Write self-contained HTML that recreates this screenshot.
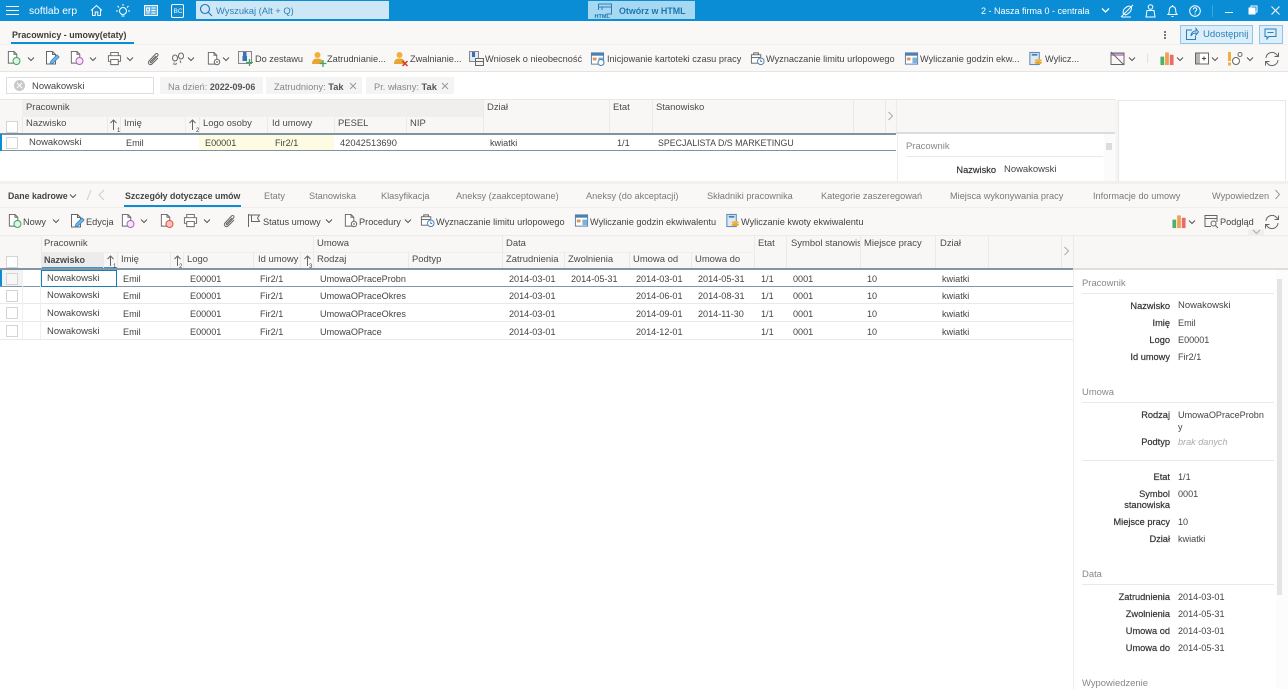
<!DOCTYPE html>
<html lang="pl"><head><meta charset="utf-8"><title>softlab erp</title>
<style>
html,body{margin:0;padding:0;width:1288px;height:699px;overflow:hidden;background:#fff}
#r{position:relative;width:1288px;height:699px;overflow:hidden;font-family:"Liberation Sans",sans-serif;font-size:9.1px;color:#444;filter:blur(.3px)}
#r div,#r span,#r svg{position:absolute}
#r span{white-space:nowrap;line-height:12px;transform:translateY(1px)}
#r span.n{font-size:9.450px}
#r span.tb{font-size:9.200px}
.b{font-weight:bold}
#r span.h{color:#4a4a4a;font-size:9.450px}
.w{color:#fff}
#r span.tab{color:#7a7a7a;font-size:9.200px}
#r span.l{text-align:right;width:100px;color:#333;-webkit-text-stroke:.2px #333;font-size:9.250px}
#r span.hd{color:#888;font-size:9.450px}
.ln{background:#e9e9e9;height:1px}
.cb{width:10px;height:10px;border:1px solid #d4d4d4;background:#fff}
svg.i{fill:none;stroke:#666;stroke-width:1}
svg.tw{fill:none;stroke:#fff;stroke-width:1}
.sp{width:1px;background:#eaeaea}
</style></head><body><div id="r">
<svg width="0" height="0" style="left:0;top:0"><defs>
<symbol id="doc" viewBox="0 0 16 16"><path d="M2.500 1.500h6l3 3v9.500h-9zM8.500 1.500v3h3" fill="#fff" stroke="#666"/></symbol>
<symbol id="chev" viewBox="0 0 8 8"><path d="M1 2.500l3 3 3-3" fill="none" stroke="#555" stroke-width="1"/></symbol>
<symbol id="print" viewBox="0 0 16 16"><path d="M4 5V1.500h8V5M4 11H1.500V5h13v6H12M4 9h8v5.500H4z" fill="#fff" stroke="#666"/></symbol>
<symbol id="clip" viewBox="0 0 16 16"><path d="M13 7l-6 6c-2 2-5-1-3-3l6.500-7c1.500-1.500 3.500.5 2 2L6.500 11.500c-.8.800-1.800-.2-1-1L11 5" fill="none" stroke="#666"/></symbol>
<symbol id="cal" viewBox="0 0 16 16"><rect x="1.500" y="2" width="13" height="12" fill="#fff" stroke="#4d7fb0"/><rect x="1.500" y="2" width="13" height="3" fill="#4d7fb0"/><rect x="3" y="7" width="4" height="3" fill="#e8924a"/><rect x="9" y="7" width="5" height="6" fill="#7fb0d8"/></symbol>
<symbol id="calc" viewBox="0 0 16 16"><rect x="2" y="1.500" width="10" height="13" fill="#dfeaf5" stroke="#4d7fb0"/><rect x="4" y="3" width="6" height="2" fill="#4d7fb0"/><ellipse cx="11" cy="10" rx="4" ry="1.500" fill="#f0b84a"/><ellipse cx="11" cy="12.500" rx="4" ry="1.500" fill="#e8a830"/></symbol>
<symbol id="brief" viewBox="0 0 16 16"><rect x="1.500" y="4" width="10" height="9" fill="#fff" stroke="#666"/><path d="M4 4V2h5v2" fill="none" stroke="#666"/><path d="M1.500 7h10" stroke="#666"/><circle cx="11.500" cy="11" r="3.500" fill="#fff" stroke="#4d7fb0"/><path d="M11.500 9v2.200h1.500" fill="none" stroke="#4d7fb0"/></symbol>
<symbol id="bars" viewBox="0 0 16 16"><rect x="1" y="6" width="4" height="9" fill="#4cb26a"/><rect x="6" y="1.500" width="4" height="13.500" fill="#f0a050"/><rect x="11" y="4" width="4" height="11" fill="#ec6a6a"/></symbol>
<symbol id="ref" viewBox="0 0 16 16"><path d="M2 7a6 6 0 0 1 10.500-3.500L14.500 5.500M14.500 1.500v4h-4M14 9a6 6 0 0 1-10.500 3.500L1.500 10.500M1.500 14.500v-4h4" fill="none" stroke="#666"/></symbol>
<symbol id="gear" viewBox="0 0 8 8"><circle cx="4" cy="4" r="2.700" fill="#fff" stroke="#666"/><circle cx="4" cy="4" r=".9" fill="#666"/></symbol>
<symbol id="person" viewBox="0 0 16 16"><circle cx="6.500" cy="4" r="3" fill="#f0b040"/><path d="M1 13c0-4 2-5.500 5.500-5.500S12 9 12 13z" fill="#e8a530"/></symbol>
</defs></svg>

<!-- top bar -->
<div style="left:0;top:0;width:1288px;height:21px;background:#0a8dd5"></div>
<div style="left:0;top:21px;width:1288px;height:50px;background:#f9f8f7"></div>
<svg class="tw" style="left:6px;top:5px" width="14" height="11"><path d="M0 1.500h13M0 5.500h13M0 9.500h13"/></svg>
<span class="w" style="left:29px;top:5px;font-size:10.300px">softlab erp</span>
<svg class="tw" style="left:90px;top:4px" width="13" height="13" viewBox="0 0 13 13"><path d="M1 6.500L6.500 1.500 12 6.500M2.500 5.500v6h2.700V8h2.600v3.500h2.700v-6"/></svg>
<svg class="tw" style="left:116px;top:4px" width="14" height="14" viewBox="0 0 14 14"><circle cx="7" cy="7" r="3.500"/><path d="M7 0v2M1.500 2l1.500 1.500M12.500 2L11 3.500M0 7h2M12 7h2M5.500 12h3"/></svg>
<svg class="tw" style="left:144px;top:5px" width="14" height="12" viewBox="0 0 14 12"><rect x=".5" y=".5" width="13" height="10" fill="#5bb4e4"/><path d="M7.500 3h4M7.500 5.500h4M7.500 8h4M2.500 3h3v3h-3zM2.500 8h3"/></svg>
<svg class="tw" style="left:171px;top:4px" width="13" height="14" viewBox="0 0 13 14"><rect x=".5" y=".5" width="12" height="13" rx="1.500"/></svg>
<span class="w" style="left:173.500px;top:5px;font-size:6.500px">BC</span>
<div style="left:196px;top:1px;width:193px;height:18px;background:#cde7f6"></div>
<svg style="left:199px;top:3px;fill:none;stroke:#1b78b6;stroke-width:1.100" width="14" height="14" viewBox="0 0 14 14"><circle cx="6" cy="6" r="4.500"/><path d="M9.500 9.500L13 13"/></svg>
<span style="left:216px;top:3.500px;color:#2a80b9;font-size:9.400px">Wyszukaj (Alt + Q)</span>
<div style="left:588px;top:1px;width:107px;height:18px;background:#a7d8f2"></div>
<svg style="left:594px;top:3px;fill:none;stroke:#2b7fb5" width="19" height="15" viewBox="0 0 19 15"><path d="M4.500 1h13v10h-5M4.500 1v6M4.500 4h13M8 4v3"/></svg>
<span class="b" style="left:594.500px;top:10px;color:#1e75ad;font-size:5.500px">HTML</span>
<span class="b" style="left:619px;top:3.500px;color:#1877b3;font-size:8.900px">Otwórz w HTML</span>
<span class="w" style="left:981px;top:3.500px;font-size:9px">2 - Nasza firma 0 - centrala</span>
<svg class="tw" style="left:1101px;top:6px;stroke-width:1.300" width="9" height="9"><path d="M1 2.500l3.500 3.500 3.500-3.500"/></svg>
<svg class="tw" style="left:1120px;top:4px" width="14" height="14" viewBox="0 0 14 14"><path d="M1 13L13 1M3.500 6c2-3 5-4.500 7-3.500s1 5-3 7.500l-2 1-2.500-2zM2 13h9"/></svg>
<svg class="tw" style="left:1145px;top:4px" width="11" height="14" viewBox="0 0 11 14"><circle cx="5.500" cy="3" r="2.300"/><path d="M1 13l1-6.500h7l1 6.500z"/></svg>
<svg class="tw" style="left:1167px;top:4px" width="11" height="14" viewBox="0 0 11 14"><path d="M1 10.500c1.200-1 1.300-2 1.300-4.500 0-2 1.400-3.500 3.200-3.500S8.700 4 8.700 6c0 2.500.1 3.500 1.300 4.500zM4.500 12.500h2M5.500 1v1.500"/></svg>
<svg class="tw" style="left:1189px;top:5px" width="12" height="12" viewBox="0 0 12 12"><circle cx="6" cy="6" r="5.300"/><path d="M4.300 4.500c0-2.300 3.500-2.300 3.500 0 0 1.300-1.800 1.300-1.800 3M6 8.500v1"/></svg>
<div style="left:1212px;top:5px;width:1px;height:12px;background:#3ba6e0"></div>
<svg class="tw" style="left:1225px;top:5px" width="9" height="10"><path d="M0 7.500h8"/></svg>
<svg class="tw" style="left:1248px;top:5px" width="10" height="10" viewBox="0 0 10 10"><rect x="1" y="3" width="6" height="6" fill="#fff"/><path d="M3 3V1h6v6H7"/></svg>
<svg class="tw" style="left:1271px;top:6px" width="9" height="9"><path d="M.5.500l8 8M8.500.500l-8 8"/></svg>

<!-- tab row -->
<span class="b" style="left:12px;top:27.500px;color:#3c3c3c;font-size:8.900px">Pracownicy - umowy(etaty)</span>
<div style="left:11px;top:42px;width:123px;height:2px;background:#0a8dd5"></div>
<div style="left:0;top:44px;width:1288px;height:1px;background:#f2f1f0"></div>
<div style="left:1164px;top:31px;width:2px;height:2px;background:#777;box-shadow:0 3px 0 #777,0 6px 0 #777"></div>
<div style="left:1180px;top:25px;width:71px;height:17px;background:#dceefa;border:1px solid #8fc6e8"></div>
<svg style="left:1185px;top:27px;fill:none;stroke:#2a80b9" width="14" height="14" viewBox="0 0 14 14"><path d="M7 3H1.500v9.500h9V9M6 9c0-3 2-5 5-5V1.500L13.500 5 11 8V6C8.500 6 7 7 6 9z"/></svg>
<span style="left:1203px;top:27.500px;color:#2a80b9;font-size:9.600px">Udostępnij</span>
<div style="left:1259px;top:25px;width:22px;height:17px;background:#dceefa;border:1px solid #8fc6e8"></div>
<svg style="left:1264px;top:28px;fill:none;stroke:#2a80b9" width="13" height="12" viewBox="0 0 13 12"><path d="M1 1h11v7.500H5l-2 2.500V8.500H1zM3.500 4.500h6"/></svg>

<!-- toolbar 1 -->
<svg style="left:6px;top:50px" width="15" height="15"><use href="#doc"/><circle cx="10.500" cy="11" r="3.500" fill="#dff3e5" stroke="#38a860"/></svg>
<svg style="left:27px;top:55px" width="8" height="8"><use href="#chev"/></svg>
<svg style="left:44px;top:50px" width="16" height="16"><use href="#doc"/><path d="M6 14l1-3 6-6 2 2-6 6z" fill="#7ab8e6" stroke="#3d8cc8"/></svg>
<svg style="left:69px;top:50px" width="15" height="15"><use href="#doc"/><circle cx="10.500" cy="11" r="3.500" fill="#f5e6f5" stroke="#b060c0"/></svg>
<svg style="left:89px;top:55px" width="8" height="8"><use href="#chev"/></svg>
<svg style="left:107px;top:51px" width="15" height="15"><use href="#print"/></svg>
<svg style="left:126px;top:55px" width="8" height="8"><use href="#chev"/></svg>
<svg style="left:145px;top:51px" width="16" height="16"><use href="#clip"/></svg>
<svg style="left:171px;top:51px;fill:none;stroke:#666" width="14" height="15" viewBox="0 0 14 15"><ellipse cx="4" cy="7" rx="2.500" ry="3"/><ellipse cx="10" cy="5" rx="2.500" ry="3"/><path d="M3 11.500v2.500M5.500 12l-1 2M9 9.500l1 2.500"/></svg>
<svg style="left:187px;top:55px" width="8" height="8"><use href="#chev"/></svg>
<svg style="left:206px;top:51px" width="15" height="15"><use href="#doc"/><use href="#gear" x="7" y="7" width="8" height="8"/></svg>
<svg style="left:222px;top:55px" width="8" height="8"><use href="#chev"/></svg>
<svg style="left:238px;top:51px" width="15" height="15" viewBox="0 0 15 15"><rect x=".5" y=".5" width="13" height="12" fill="#eef3f8" stroke="#888"/><rect x="5" y="1" width="3.500" height="4" fill="#3d6fb0"/><rect x="4.500" y="5" width="4.500" height="5" fill="#3d6fb0"/><path d="M11.500 8v7M8 11.500h7" stroke="#38a860" stroke-width="1.300"/></svg>
<span class="tb" style="left:255px;top:52px">Do zestawu</span>
<svg style="left:311px;top:51px" width="16" height="16"><use href="#person"/><path d="M12 9v7M8.500 12.500h7" stroke="#38a860" stroke-width="1.300"/></svg>
<span class="tb" style="left:327px;top:52px">Zatrudnianie...</span>
<svg style="left:393px;top:51px" width="16" height="16"><use href="#person"/><path d="M9.500 10l5 5M14.500 10l-5 5" stroke="#d43a2a" stroke-width="1.500"/></svg>
<span class="tb" style="left:410px;top:52px">Zwalnianie...</span>
<svg style="left:469px;top:51px" width="15" height="15" viewBox="0 0 15 15"><rect x=".5" y=".5" width="9" height="10" fill="#dfeaf5" stroke="#888"/><rect x="3" y="1" width="3" height="5" fill="#3d6fb0"/><rect x="6.500" y="7.500" width="8" height="7" fill="#f5f5f5" stroke="#666"/><path d="M6.500 10.500h8" stroke="#666"/></svg>
<span class="tb" style="left:485px;top:52px">Wniosek o nieobecność</span>
<svg style="left:590px;top:51px" width="15" height="15"><use href="#cal"/><circle cx="11" cy="11.500" r="3" fill="#fff" stroke="#4d7fb0"/></svg>
<span class="tb" style="left:607px;top:52px">Inicjowanie kartoteki czasu pracy</span>
<svg style="left:750px;top:51px" width="15" height="15"><use href="#brief"/></svg>
<span class="tb" style="left:766px;top:52px">Wyznaczanie limitu urlopowego</span>
<svg style="left:904px;top:51px" width="15" height="15"><use href="#cal"/></svg>
<span class="tb" style="left:920px;top:52px">Wyliczanie godzin ekw...</span>
<svg style="left:1028px;top:51px" width="15" height="15"><use href="#calc"/></svg>
<span class="tb" style="left:1045px;top:52px">Wylicz...</span>
<svg style="left:1110px;top:51px;fill:none" width="15" height="15" viewBox="0 0 15 15"><rect x="1" y="2" width="13" height="3" fill="#c79bd1"/><rect x="1" y="2" width="13" height="11.500" stroke="#666"/><path d="M1 1l13 13" stroke="#666"/></svg>
<svg style="left:1128px;top:55px" width="8" height="8"><use href="#chev"/></svg>
<div style="left:1147px;top:54px;width:1px;height:9px;background:#e0e0e0"></div>
<svg style="left:1159px;top:51px" width="16" height="15"><use href="#bars"/></svg>
<svg style="left:1176px;top:55px" width="8" height="8"><use href="#chev"/></svg>
<svg style="left:1195px;top:52px" width="15" height="14" viewBox="0 0 15 14"><rect x=".5" y="1" width="13" height="11" fill="#fff" stroke="#666"/><rect x="1" y="1.500" width="4" height="10" fill="#b5b5b5"/><path d="M7 6.500h4M9 4.500v4" stroke="#444"/></svg>
<svg style="left:1211px;top:55px" width="8" height="8"><use href="#chev"/></svg>
<svg style="left:1227px;top:51px" width="16" height="16" viewBox="0 0 16 16"><rect x="1" y="1" width="3" height="9" fill="#f0b040"/><rect x="1" y="11.500" width="3" height="3" fill="#f0b040"/><circle cx="9" cy="10" r="3.500" fill="#fff" stroke="#666"/><circle cx="13" cy="3.500" r="2" fill="#fff" stroke="#666"/></svg>
<svg style="left:1246px;top:55px" width="8" height="8"><use href="#chev"/></svg>
<svg style="left:1264px;top:51px" width="16" height="16"><use href="#ref"/></svg>
<div style="left:0;top:71px;width:1288px;height:1px;background:#e4e4e4"></div>

<!-- filter row -->
<div style="left:6px;top:77px;width:146px;height:15px;border:1px solid #dedede;background:#fff"></div>
<div style="left:14px;top:80px;width:11px;height:11px;border-radius:6px;background:#c9c9c9"></div>
<svg style="left:16px;top:82px;stroke:#fff" width="7" height="7"><path d="M1 1l5 5M6 1l-5 5"/></svg>
<span class="n" style="left:32px;top:79.500px">Nowakowski</span>
<div style="left:160px;top:77px;width:103px;height:17px;background:#f4f4f4"></div>
<span style="left:168px;top:79.500px;color:#888;font-size:9.300px">Na dzień: <b style="color:#555;font-weight:bold;font-size:8.900px">2022-09-06</b></span>
<div style="left:266px;top:77px;width:96px;height:17px;background:#f4f4f4"></div>
<span style="left:274px;top:79.500px;color:#888;font-size:9.300px">Zatrudniony: <b style="color:#555">Tak</b></span>
<svg style="left:349px;top:82px;stroke:#999" width="8" height="8"><path d="M1 1l6 6M7 1L1 7"/></svg>
<div style="left:366px;top:77px;width:88px;height:17px;background:#f4f4f4"></div>
<span style="left:374px;top:79.500px;color:#888;font-size:9.300px">Pr. własny: <b style="color:#555">Tak</b></span>
<svg style="left:441px;top:82px;stroke:#999" width="8" height="8"><path d="M1 1l6 6M7 1L1 7"/></svg>

<!-- upper grid -->
<div style="left:0;top:99px;width:1115px;height:34px;background:#f8f7f6;border-top:1px solid #e6e6e6"></div>
<div style="left:22px;top:100px;width:461px;height:17px;background:#f0efee"></div>
<div style="left:896px;top:100px;width:1px;height:33px;background:#ececec"></div>
<div style="left:0;top:133px;width:896px;height:2px;background:#7f93a3"></div>
<div style="left:896px;top:132px;width:219px;height:2px;background:#dcdcdc"></div>
<div style="left:0;top:150px;width:896px;height:1px;background:#7f93a3"></div>
<div style="left:0;top:134px;width:2px;height:17px;background:#0a8dd5"></div>
<span class="h" style="left:26px;top:101px">Pracownik</span>
<span class="h" style="left:487px;top:101px">Dział</span>
<span class="h" style="left:613px;top:101px">Etat</span>
<span class="h" style="left:656px;top:101px">Stanowisko</span>
<span class="h" style="left:26px;top:117px">Nazwisko</span>
<span class="h" style="left:124px;top:117px">Imię</span>
<span class="h" style="left:203px;top:117px">Logo osoby</span>
<span class="h" style="left:272px;top:117px">Id umowy</span>
<span class="h" style="left:338px;top:117px">PESEL</span>
<span class="h" style="left:410px;top:117px">NIP</span>
<svg style="left:109px;top:119px;fill:none;stroke:#666" width="9" height="11"><path d="M4.500 11V1M1.500 4l3-3 3 3"/></svg><span style="left:117px;top:124px;font-size:6px">1</span>
<svg style="left:188px;top:119px;fill:none;stroke:#666" width="9" height="11"><path d="M4.500 11V1M1.500 4l3-3 3 3"/></svg><span style="left:196px;top:124px;font-size:6px">2</span>
<div class="sp" style="left:22px;top:117px;height:16px"></div><div class="sp" style="left:107px;top:117px;height:16px"></div><div class="sp" style="left:120px;top:117px;height:16px"></div><div class="sp" style="left:185px;top:117px;height:16px"></div><div class="sp" style="left:199px;top:117px;height:16px"></div><div class="sp" style="left:267px;top:117px;height:16px"></div><div class="sp" style="left:334px;top:117px;height:16px"></div><div class="sp" style="left:406px;top:117px;height:16px"></div><div class="sp" style="left:483px;top:100px;height:33px"></div><div class="sp" style="left:609px;top:100px;height:33px"></div><div class="sp" style="left:652px;top:100px;height:33px"></div><div class="sp" style="left:853px;top:100px;height:33px"></div><div class="sp" style="left:885px;top:100px;height:33px"></div>
<div class="cb" style="left:6px;top:121px"></div>
<svg style="left:887px;top:111px;fill:none;stroke:#aaa" width="7" height="10"><path d="M1.500 1l4 4-4 4"/></svg>
<div class="cb" style="left:6px;top:137px"></div>
<div style="left:199px;top:135px;width:135px;height:15px;background:#fdfce2"></div>
<span class="n" style="left:29px;top:136px">Nowakowski</span>
<span style="left:126px;top:136px">Emil</span>
<span style="left:205px;top:136px">E00001</span>
<span style="left:275px;top:136px">Fir2/1</span>
<span style="left:340px;top:136px;font-size:9.300px">42042513690</span>
<span style="left:490px;top:136px">kwiatki</span>
<span style="left:617px;top:136px">1/1</span>
<span style="left:658px;top:136px;font-size:8.800px">SPECJALISTA D/S MARKETINGU</span>

<!-- upper details -->
<div style="left:897px;top:134px;width:1px;height:47px;background:#ececec"></div>
<span class="hd" style="left:906px;top:140px">Pracownik</span>
<div class="ln" style="left:906px;top:156px;width:197px"></div>
<span class="l" style="left:896px;top:163px">Nazwisko</span>
<span class="n" style="left:1004px;top:163px">Nowakowski</span>
<div style="left:1104px;top:134px;width:10px;height:47px;background:#fbfbfb"></div>
<div style="left:1106px;top:143px;width:6px;height:7px;background:#dcdcdc"></div>
<div style="left:1115px;top:100px;width:3px;height:81px;background:#f5f5f5"></div>
<div style="left:1118px;top:100px;width:166px;height:81px;border:1px solid #e8e8e8;background:#fff"></div>
<div style="left:0;top:181px;width:1288px;height:3px;background:#f1f0ef"></div>

<!-- tabs lower -->
<div style="left:0;top:184px;width:1288px;height:52px;background:#f9f8f7"></div>
<div style="left:0;top:207px;width:1288px;height:1px;background:#efeeed"></div>
<span class="b" style="left:8px;top:188.500px;font-size:8.800px">Dane kadrowe</span>
<svg style="left:69px;top:192px" width="8" height="8"><use href="#chev"/></svg>
<svg style="left:85px;top:189px;fill:none;stroke:#ccc" width="20" height="12"><path d="M6 1L2 11M19 1l-5 5 5 5"/></svg>
<span class="b" style="left:125px;top:188.500px;font-size:8.800px">Szczegóły dotyczące umów</span>
<div style="left:124px;top:205px;width:117px;height:2px;background:#0a8dd5"></div>
<span class="tab" style="left:264px;top:188.500px">Etaty</span>
<span class="tab" style="left:309px;top:188.500px">Stanowiska</span>
<span class="tab" style="left:381px;top:188.500px">Klasyfikacja</span>
<span class="tab" style="left:456px;top:188.500px">Aneksy (zaakceptowane)</span>
<span class="tab" style="left:586px;top:188.500px">Aneksy (do akceptacji)</span>
<span class="tab" style="left:707px;top:188.500px">Składniki pracownika</span>
<span class="tab" style="left:821px;top:188.500px">Kategorie zaszeregowań</span>
<span class="tab" style="left:950px;top:188.500px">Miejsca wykonywania pracy</span>
<span class="tab" style="left:1093px;top:188.500px">Informacje do umowy</span>
<span class="tab" style="left:1212px;top:188.500px">Wypowiedzen</span>
<svg style="left:1274px;top:189px;fill:none;stroke:#999" width="7" height="11"><path d="M1.500 1l4 4.500-4 4.500"/></svg>

<!-- toolbar 2 -->
<svg style="left:7px;top:213px" width="15" height="15"><use href="#doc"/><circle cx="10.500" cy="11" r="3.500" fill="#dff3e5" stroke="#38a860"/></svg>
<span class="tb" style="left:23px;top:214.500px">Nowy</span>
<svg style="left:52px;top:217px" width="8" height="8"><use href="#chev"/></svg>
<svg style="left:69px;top:213px" width="16" height="16"><use href="#doc"/><path d="M6 14l1-3 6-6 2 2-6 6z" fill="#7ab8e6" stroke="#3d8cc8"/></svg>
<span class="tb" style="left:86px;top:214.500px">Edycja</span>
<svg style="left:120px;top:213px" width="15" height="15"><use href="#doc"/><circle cx="10.500" cy="11" r="3.500" fill="#f5e6f5" stroke="#b060c0"/></svg>
<svg style="left:140px;top:217px" width="8" height="8"><use href="#chev"/></svg>
<svg style="left:159px;top:213px" width="15" height="15"><use href="#doc"/><circle cx="10.500" cy="11" r="3.500" fill="#f9c5bd" stroke="#e0503c"/></svg>
<svg style="left:183px;top:213px" width="15" height="15"><use href="#print"/></svg>
<svg style="left:203px;top:217px" width="8" height="8"><use href="#chev"/></svg>
<svg style="left:221px;top:213px" width="16" height="16"><use href="#clip"/></svg>
<svg style="left:247px;top:213px;fill:none;stroke:#666" width="14" height="15" viewBox="0 0 14 15"><path d="M1.500 14V1M1.500 2h11l-2 3 2 3.500h-8V2"/></svg>
<span class="tb" style="left:263px;top:214.500px">Status umowy</span>
<svg style="left:325px;top:217px" width="8" height="8"><use href="#chev"/></svg>
<svg style="left:343px;top:213px" width="15" height="15"><use href="#doc"/><use href="#gear" x="7" y="7" width="8" height="8"/></svg>
<span class="tb" style="left:359px;top:214.500px">Procedury</span>
<svg style="left:404px;top:217px" width="8" height="8"><use href="#chev"/></svg>
<svg style="left:420px;top:213px" width="15" height="15"><use href="#brief"/></svg>
<span class="tb" style="left:436px;top:214.500px">Wyznaczanie limitu urlopowego</span>
<svg style="left:574px;top:213px" width="15" height="15"><use href="#cal"/></svg>
<span class="tb" style="left:590px;top:214.500px">Wyliczanie godzin ekwiwalentu</span>
<svg style="left:725px;top:213px" width="15" height="15"><use href="#calc"/></svg>
<span class="tb" style="left:741px;top:214.500px">Wyliczanie kwoty ekwiwalentu</span>
<svg style="left:1171px;top:214px" width="16" height="15"><use href="#bars"/></svg>
<svg style="left:1188px;top:218px" width="8" height="8"><use href="#chev"/></svg>
<svg style="left:1204px;top:214px;fill:none;stroke:#666" width="15" height="15" viewBox="0 0 15 15"><path d="M7 12.500H1V1.500h12V8M1 4.500h12"/><circle cx="9.500" cy="9.500" r="2.500"/><path d="M11.500 11.500l2.500 2.500"/></svg>
<span class="tb" style="left:1220px;top:214.500px">Podgląd</span>
<svg style="left:1264px;top:214px" width="16" height="16"><use href="#ref"/></svg>
<div style="left:1248px;top:229px;width:16px;height:6px;background:#f0efee"></div>
<svg style="left:1252px;top:229px;fill:none;stroke:#aaa" width="9" height="6"><path d="M1 1l3.500 3.500L8 1"/></svg>
<div style="left:0;top:235px;width:1288px;height:1px;background:#ececec"></div>

<!-- lower grid header -->
<div style="left:0;top:236px;width:1288px;height:32px;background:#f8f7f6"></div>
<div style="left:41px;top:252px;width:712px;height:1px;background:#efefef"></div>
<div style="left:41px;top:252px;width:62px;height:15px;background:#ececec"></div>
<div style="left:41px;top:267px;width:76px;height:1px;background:#3b96d0"></div>
<div style="left:0;top:268px;width:1073px;height:2px;background:#8496a5"></div>
<div style="left:1073px;top:268px;width:215px;height:2px;background:#dedede"></div>
<span class="h" style="left:44px;top:237px">Pracownik</span>
<span class="h" style="left:317px;top:237px">Umowa</span>
<span class="h" style="left:506px;top:237px">Data</span>
<span class="h" style="left:758px;top:237px">Etat</span>
<span class="h" style="left:791px;top:237px;width:69px;overflow:hidden">Symbol stanowis</span>
<span class="h" style="left:864px;top:237px">Miejsce pracy</span>
<span class="h" style="left:940px;top:237px">Dział</span>
<span class="b h" style="left:44px;top:253px;font-size:9px">Nazwisko</span>
<span class="h" style="left:121px;top:253px">Imię</span>
<span class="h" style="left:187px;top:253px">Logo</span>
<span class="h" style="left:258px;top:253px">Id umowy</span>
<span class="h" style="left:317px;top:253px">Rodzaj</span>
<span class="h" style="left:412px;top:253px">Podtyp</span>
<span class="h" style="left:506px;top:253px">Zatrudnienia</span>
<span class="h" style="left:568px;top:253px">Zwolnienia</span>
<span class="h" style="left:633px;top:253px">Umowa od</span>
<span class="h" style="left:695px;top:253px">Umowa do</span>
<svg style="left:106px;top:255px;fill:none;stroke:#666" width="9" height="11"><path d="M4.500 11V1M1.500 4l3-3 3 3"/></svg><span style="left:113px;top:260px;font-size:6px">1</span>
<svg style="left:173px;top:255px;fill:none;stroke:#666" width="9" height="11"><path d="M4.500 11V1M1.500 4l3-3 3 3"/></svg><span style="left:179px;top:260px;font-size:6px">2</span>
<svg style="left:303px;top:255px;fill:none;stroke:#666" width="9" height="11"><path d="M4.500 11V1M1.500 4l3-3 3 3"/></svg><span style="left:309px;top:260px;font-size:6px">3</span>
<div class="sp" style="left:41px;top:236px;height:32px"></div><div class="sp" style="left:103px;top:252px;height:16px"></div><div class="sp" style="left:117px;top:252px;height:16px"></div><div class="sp" style="left:170px;top:252px;height:16px"></div><div class="sp" style="left:183px;top:252px;height:16px"></div><div class="sp" style="left:253px;top:252px;height:16px"></div><div class="sp" style="left:300px;top:252px;height:16px"></div><div class="sp" style="left:313px;top:236px;height:32px"></div><div class="sp" style="left:408px;top:252px;height:16px"></div><div class="sp" style="left:502px;top:236px;height:32px"></div><div class="sp" style="left:564px;top:252px;height:16px"></div><div class="sp" style="left:629px;top:252px;height:16px"></div><div class="sp" style="left:691px;top:252px;height:16px"></div><div class="sp" style="left:754px;top:236px;height:32px"></div><div class="sp" style="left:786px;top:236px;height:32px"></div><div class="sp" style="left:860px;top:236px;height:32px"></div><div class="sp" style="left:935px;top:236px;height:32px"></div><div class="sp" style="left:988px;top:236px;height:32px"></div><div class="sp" style="left:1061px;top:236px;height:32px"></div><div class="sp" style="left:1073px;top:236px;height:32px"></div>
<div class="cb" style="left:6px;top:256px"></div>
<svg style="left:1063px;top:246px;fill:none;stroke:#aaa" width="7" height="10"><path d="M1.500 1l4 4-4 4"/></svg>

<!-- lower rows -->
<div style="left:0;top:270px;width:22px;height:16px;background:#f3f3f3"></div>
<div style="left:0;top:270px;width:2px;height:16px;background:#0a8dd5"></div>
<div style="left:0;top:286px;width:1073px;height:1px;background:#8496a5"></div>
<div class="ln" style="left:0;top:303px;width:1073px"></div>
<div class="ln" style="left:0;top:321px;width:1073px"></div>
<div class="ln" style="left:0;top:339px;width:1073px"></div>
<div style="left:22px;top:270px;width:1px;height:69px;background:#efefef"></div>
<div style="left:40px;top:270px;width:1px;height:69px;background:#efefef"></div>
<div style="left:41px;top:270px;width:74px;height:15px;border:1px solid #1a7fb8"></div>
<div class="cb" style="left:6px;top:273px;background:#f7f7f7"></div>
<div class="cb" style="left:6px;top:290px"></div>
<div class="cb" style="left:6px;top:307px"></div>
<div class="cb" style="left:6px;top:325px"></div>

<span class="n" style="left:47px;top:272px">Nowakowski</span><span style="left:123px;top:272px">Emil</span><span style="left:190px;top:272px">E00001</span><span style="left:260px;top:272px">Fir2/1</span><span style="left:320px;top:272px">UmowaOPraceProbn</span><span style="left:509px;top:272px">2014-03-01</span><span style="left:571px;top:272px">2014-05-31</span><span style="left:636px;top:272px">2014-03-01</span><span style="left:698px;top:272px">2014-05-31</span><span style="left:761px;top:272px">1/1</span><span style="left:793px;top:272px">0001</span><span style="left:867px;top:272px">10</span><span style="left:942px;top:272px">kwiatki</span>

<span class="n" style="left:47px;top:289px">Nowakowski</span><span style="left:123px;top:289px">Emil</span><span style="left:190px;top:289px">E00001</span><span style="left:260px;top:289px">Fir2/1</span><span style="left:320px;top:289px">UmowaOPraceOkres</span><span style="left:509px;top:289px">2014-03-01</span><span style="left:636px;top:289px">2014-06-01</span><span style="left:698px;top:289px">2014-08-31</span><span style="left:761px;top:289px">1/1</span><span style="left:793px;top:289px">0001</span><span style="left:867px;top:289px">10</span><span style="left:942px;top:289px">kwiatki</span>

<span class="n" style="left:47px;top:306.500px">Nowakowski</span><span style="left:123px;top:306.500px">Emil</span><span style="left:190px;top:306.500px">E00001</span><span style="left:260px;top:306.500px">Fir2/1</span><span style="left:320px;top:306.500px">UmowaOPraceOkres</span><span style="left:509px;top:306.500px">2014-03-01</span><span style="left:636px;top:306.500px">2014-09-01</span><span style="left:698px;top:306.500px">2014-11-30</span><span style="left:761px;top:306.500px">1/1</span><span style="left:793px;top:306.500px">0001</span><span style="left:867px;top:306.500px">10</span><span style="left:942px;top:306.500px">kwiatki</span>

<span class="n" style="left:47px;top:325px">Nowakowski</span><span style="left:123px;top:325px">Emil</span><span style="left:190px;top:325px">E00001</span><span style="left:260px;top:325px">Fir2/1</span><span style="left:320px;top:325px">UmowaOPrace</span><span style="left:509px;top:325px">2014-03-01</span><span style="left:636px;top:325px">2014-12-01</span><span style="left:761px;top:325px">1/1</span><span style="left:793px;top:325px">0001</span><span style="left:867px;top:325px">10</span><span style="left:942px;top:325px">kwiatki</span>

<!-- right details -->
<div style="left:1073px;top:270px;width:1px;height:429px;background:#ededed"></div>
<div style="left:1276px;top:270px;width:12px;height:429px;background:#fcfcfc"></div>
<div style="left:1277px;top:279px;width:5px;height:316px;background:#e4e4e4"></div>
<span class="hd" style="left:1082px;top:277px">Pracownik</span>
<div class="ln" style="left:1082px;top:293px;width:192px"></div>
<span class="l" style="left:1070px;top:299px">Nazwisko</span><span class="n" style="left:1178px;top:299px">Nowakowski</span>
<span class="l" style="left:1070px;top:316px">Imię</span><span style="left:1178px;top:316px">Emil</span>
<span class="l" style="left:1070px;top:333px">Logo</span><span style="left:1178px;top:333px">E00001</span>
<span class="l" style="left:1070px;top:350px">Id umowy</span><span style="left:1178px;top:350px">Fir2/1</span>
<span class="hd" style="left:1082px;top:386px">Umowa</span>
<div class="ln" style="left:1082px;top:402px;width:192px"></div>
<span class="l" style="left:1070px;top:408px">Rodzaj</span><span style="left:1178px;top:408px">UmowaOPraceProbn</span><span style="left:1178px;top:420px">y</span>
<span class="l" style="left:1070px;top:435px">Podtyp</span><span style="left:1178px;top:435px;color:#aaa;font-style:italic">brak danych</span>
<div class="ln" style="left:1082px;top:460px;width:192px"></div>
<span class="l" style="left:1070px;top:470px">Etat</span><span style="left:1178px;top:470px">1/1</span>
<span class="l" style="left:1070px;top:487px">Symbol</span><span style="left:1178px;top:487px">0001</span>
<span class="l" style="left:1070px;top:498px">stanowiska</span>
<span class="l" style="left:1070px;top:515px">Miejsce pracy</span><span style="left:1178px;top:515px">10</span>
<span class="l" style="left:1070px;top:532px">Dział</span><span style="left:1178px;top:532px">kwiatki</span>
<span class="hd" style="left:1082px;top:568px">Data</span>
<div class="ln" style="left:1082px;top:584px;width:192px"></div>
<span class="l" style="left:1070px;top:590px">Zatrudnienia</span><span style="left:1178px;top:590px">2014-03-01</span>
<span class="l" style="left:1070px;top:607px">Zwolnienia</span><span style="left:1178px;top:607px">2014-05-31</span>
<span class="l" style="left:1070px;top:624px">Umowa od</span><span style="left:1178px;top:624px">2014-03-01</span>
<span class="l" style="left:1070px;top:641px">Umowa do</span><span style="left:1178px;top:641px">2014-05-31</span>
<span class="hd" style="left:1082px;top:677px">Wypowiedzenie</span>
<div style="left:0;top:689px;width:1288px;height:10px;background:#fff"></div>
</div></body></html>
